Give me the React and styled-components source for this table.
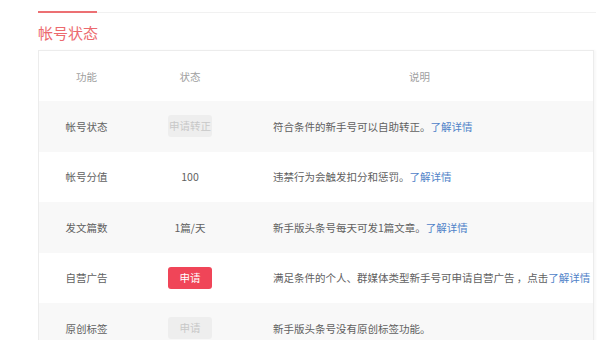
import React from "react";
import styled, { createGlobalStyle } from "styled-components";

const GlobalStyle = createGlobalStyle`
  body {
    margin: 0;
    background: #ffffff;
    font-family: "Noto Sans CJK SC", "Liberation Sans", sans-serif;
  }
`;

const ROWS = [
  {
    name: "帐号状态",
    status: { kind: "disabled", text: "申请转正" },
    desc: "符合条件的新手号可以自助转正。",
  },
  { name: "帐号分值", status: { kind: "text", text: "100" }, desc: "违禁行为会触发扣分和惩罚。" },
  { name: "发文篇数", status: { kind: "text", text: "1篇/天" }, desc: "新手版头条号每天可发1篇文章。" },
  {
    name: "自营广告",
    status: { kind: "primary", text: "申请" },
    desc: "满足条件的个人、群媒体类型新手号可申请自营广告 ，点击",
  },
  { name: "原创标签", status: { kind: "disabled", text: "申请" }, desc: "新手版头条号没有原创标签功能。", noLink: true },
];

const Status = ({ status }) => {
  if (status.kind === "text") return <span>{status.text}</span>;
  return <Badge $primary={status.kind === "primary"}>{status.text}</Badge>;
};

const App = () => {
  return (
    <Page>
      <GlobalStyle />
      <TabBar>
        <ActiveTab />
      </TabBar>
      <Title>帐号状态</Title>
      <Table>
        <HeadRow>
          <HeadCell>功能</HeadCell>
          <HeadCell>状态</HeadCell>
          <HeadCell>说明</HeadCell>
        </HeadRow>
        {ROWS.map((row, i) => (
          <Row key={row.name} $striped={i % 2 === 0}>
            <Cell>{row.name}</Cell>
            <Cell>
              <Status status={row.status} />
            </Cell>
            <DescCell>
              {row.desc}
              {!row.noLink && <Link>了解详情</Link>}
            </DescCell>
          </Row>
        ))}
      </Table>
    </Page>
  );
};

export default App;

const Page = styled.div`
  width: 600px;
  height: 340px;
  overflow: hidden;
  padding-left: 38px;
  box-sizing: border-box;
`;

const TabBar = styled.div`
  width: 558px;
  height: 12px;
  border-bottom: 1px solid #f1f1f1;
  display: flex;
  align-items: flex-end;
`;

const ActiveTab = styled.div`
  width: 59px;
  height: 2px;
  margin-bottom: -1px;
  background: #ec7073;
`;

const Title = styled.h2`
  margin: 10px 0 7px;
  font-size: 15px;
  line-height: 20px;
  font-weight: 400;
  color: #ec6a6e;
`;

const Table = styled.div`
  width: 556px;
  border: 1px solid #ececec;
  box-sizing: border-box;
  box-shadow: 2px 0 2px rgba(0, 0, 0, 0.03);
`;

const HeadRow = styled.div`
  display: grid;
  grid-template-columns: 95px 112px 1fr;
  height: 50px;
  align-items: center;
  background: #ffffff;
`;

const HeadCell = styled.div`
  text-align: center;
  font-size: 10.5px;
  color: #a0a0a0;
`;

const Row = styled.div`
  display: grid;
  grid-template-columns: 95px 112px 1fr;
  height: 50.5px;
  align-items: center;
  background: ${(p) => (p.$striped ? "#f8f8f8" : "#ffffff")};
`;

const Cell = styled.div`
  text-align: center;
  font-size: 10.5px;
  color: #616161;
`;

const DescCell = styled.div`
  padding-left: 27px;
  font-size: 10.5px;
  color: #616161;
  white-space: nowrap;
`;

const Link = styled.span`
  color: #4f82c8;
`;

const Badge = styled.span`
  display: inline-block;
  width: 44px;
  height: 22px;
  line-height: 22px;
  border-radius: 3px;
  font-size: 10.5px;
  text-align: center;
  background: ${(p) => (p.$primary ? "#f04558" : "#eeeeee")};
  color: ${(p) => (p.$primary ? "#ffffff" : "#c8c8c8")};
`;
